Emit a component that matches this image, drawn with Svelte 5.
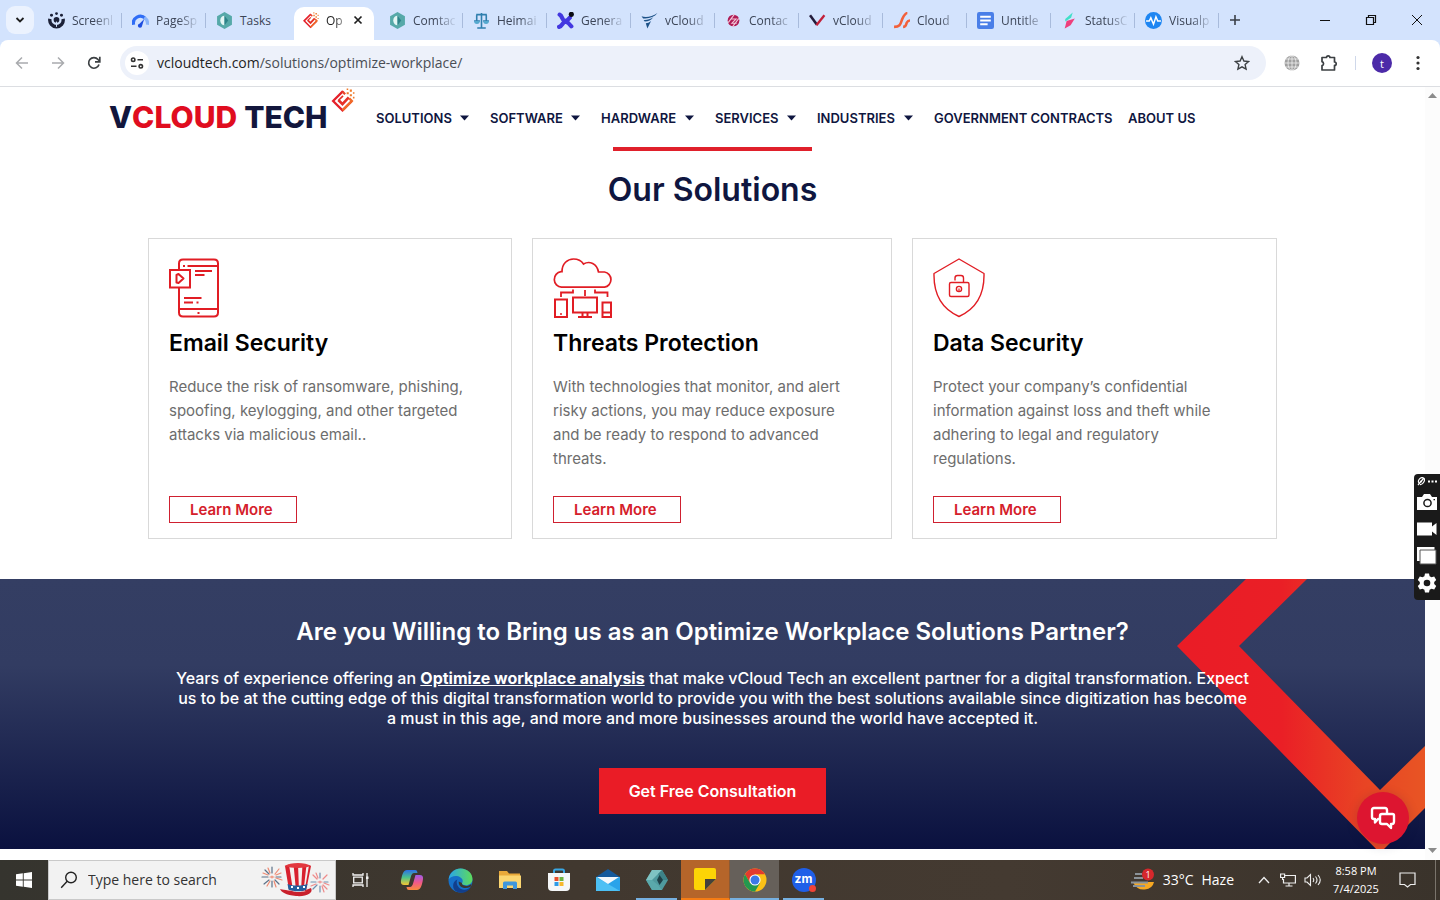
<script>
  const tabs = [
    { title: 'Screenl', icon: 'screen' },
    { title: 'PageSp', icon: 'speed' },
    { title: 'Tasks', icon: 'hex' },
    { title: 'Op', icon: 'diamond', active: true },
    { title: 'Comtac', icon: 'hex' },
    { title: 'Heimai', icon: 'scale' },
    { title: 'Genera', icon: 'x' },
    { title: 'vCloud', icon: 'wing' },
    { title: 'Contac', icon: 'dot' },
    { title: 'vCloud', icon: 'vee' },
    { title: 'Cloud', icon: 'slash' },
    { title: 'Untitle', icon: 'doc' },
    { title: 'StatusC', icon: 'bolt' },
    { title: 'Visualp', icon: 'pulse' }
  ];

  const menu = [
    { label: 'SOLUTIONS', drop: true },
    { label: 'SOFTWARE', drop: true },
    { label: 'HARDWARE', drop: true },
    { label: 'SERVICES', drop: true },
    { label: 'INDUSTRIES', drop: true },
    { label: 'GOVERNMENT CONTRACTS' },
    { label: 'ABOUT US' }
  ];

  const cards = [
    {
      icon: 'email',
      title: 'Email Security',
      text: 'Reduce the risk of ransomware, phishing,\nspoofing, keylogging, and other targeted\nattacks via malicious email..'
    },
    {
      icon: 'threat',
      title: 'Threats Protection',
      text: 'With technologies that monitor, and alert\nrisky actions, you may reduce exposure\nand be ready to respond to advanced\nthreats.'
    },
    {
      icon: 'data',
      title: 'Data Security',
      text: 'Protect your company’s confidential\ninformation against loss and theft while\nadhering to legal and regulatory\nregulations.'
    }
  ];
</script>

{#snippet diamond(size)}
  <svg width={size} height={size} viewBox="0 0 24 24" fill="none" aria-hidden="true">
    <path d="M12.500 3 3 12.500 12 21.500 21 12.500" stroke="#e5202a" stroke-width="2.200" />
    <path d="M12 21.500 21 12.500 18.500 10" stroke="#f06a28" stroke-width="2.200" />
    <path d="M12 3.500 14.500 6" stroke="#e8442a" stroke-width="2.200" />
    <path d="m8 11.500 4 4 6-6.500" stroke="#e63028" stroke-width="2.600" />
    <path d="M8 12 12.500 7.500" stroke="#e63028" stroke-width="1.600" />
    <path d="M16 4h2v2h-2zM19 1.500h2v2h-2zM19 6h2v2h-2zM22 4h1.500v1.500H22zM16 .5h1.500V2H16zM22 8.500h1.500V10H22z" fill="#f07a2a" />
  </svg>
{/snippet}

{#snippet favicon(name)}
  {#if name === 'diamond'}
    {@render diamond(17)}
  {:else}
    <svg width="17" height="17" viewBox="0 0 16 16" fill="none" aria-hidden="true">
      {#if name === 'screen'}
        <path d="M1.800 6.500a6.300 6.300 0 1 0 12.400 0" stroke="#1c2138" stroke-width="3.200" />
        <circle cx="8" cy="7.300" r="2.700" fill="#1c2138" />
        <path d="M8 9v5" stroke="#d3e3fd" />
        <circle cx="3.300" cy="3" r="1.400" fill="#1c2138" /><circle cx="8" cy="1.500" r="1.300" fill="#1c2138" /><circle cx="12.700" cy="3" r="1.400" fill="#1c2138" />
      {:else if name === 'speed'}
        <path d="M1.500 12a6.500 6.500 0 0 1 11-6" stroke="#2f6df6" stroke-width="3" />
        <path d="M11.500 5.300A6.500 6.500 0 0 1 14.500 12" stroke="#8ab4f8" stroke-width="3" />
        <path d="m11.500 6.500-2 6.500a2 2 0 1 1-2.500-2z" fill="#1f4fe0" />
      {:else if name === 'hex'}
        <path d="m8 0 7 4v8l-7 4-7-4V4z" fill="#56a9a9" />
        <path d="M8 3.500A4 4.500 0 0 0 8 12.500z" fill="#e3f6f4" />
        <path d="M8 3.500v9l3.500-4.500z" fill="#2d8288" />
      {:else if name === 'scale'}
        <path d="M8 1v14M3 2.500h10M1 8.500h5.500M9.500 8.500H15M4 15h8M3.500 3v5M12.500 3v5" stroke="#2f7fae" stroke-width="1.500" />
        <path d="M1 8.500a2.700 2.700 0 0 0 5.400 0zM9.600 8.500a2.700 2.700 0 0 0 5.400 0z" fill="#55a9cf" />
      {:else if name === 'x'}
        <path d="M2.500 2.500c3 1.500 1.500 4.500 5 6s4 2 6 5M2 14c3-.5 2.500-3.500 5.500-5s3-1.500 4.500-3.500" stroke="#4338e0" stroke-width="4" stroke-linecap="round" />
        <circle cx="13.500" cy="2.200" r="2.400" fill="#0b0b12" />
      {:else if name === 'wing'}
        <path d="M.5 4c4 1.500 10 .5 15-3-3 4-8 5.500-13.500 5zM2.500 7.500c3 .3 6-.5 9-2.500-2 3-4.500 4-8 4zM4.500 10.500c2 0 3-.5 5-2l-3.500 7z" fill="#1d5288" />
      {:else if name === 'dot'}
        <circle cx="8" cy="8" r="5.500" fill="#b01c56" />
        <path d="m3 10 6-8M7 14l6-8M5.500 6.500h5l-4 4h4.500" stroke="#f3c6d8" />
      {:else if name === 'vee'}
        <path d="M1 3l6.500 9" stroke="#241b3a" stroke-width="2.400" /><path d="M7 12.500 14.500 3" stroke="#c2203a" stroke-width="2.200" />
      {:else if name === 'slash'}
        <path d="M1 14c7 0 6-4 8-8s3-5 4.500-5" stroke="#f2603a" stroke-width="2.400" />
        <path d="M9.500 14c3 0 2.500-2 3.500-4s1.500-2 3-2" stroke="#f2603a" stroke-width="2.400" />
      {:else if name === 'doc'}
        <rect width="16" height="16" rx="2" fill="#4a7fe8" />
        <path d="M3 4.500h10M3 8h10M3 11.500h7" stroke="#fff" stroke-width="1.800" />
      {:else if name === 'bolt'}
        <path d="M4 6.500 11 .5 9.500 5.500 4 9z" fill="#3fe0c8" />
        <path d="m3.500 15.500 1.800-7L13 6l-4 6.500z" fill="#ee3f7c" />
      {:else if name === 'pulse'}
        <circle cx="8" cy="8" r="8" fill="#1e86f2" />
        <path d="M1 8.500h3l1.500-3 2.500 6 2.300-7 1.700 4h3" stroke="#fff" stroke-width="1.400" />
      {/if}
    </svg>
  {/if}
{/snippet}

<div class="desktop">
  <header class="browser">
    <div class="strip">
      <button class="tab-search" aria-label="Search tabs">
        <svg width="10" height="10" viewBox="0 0 10 10" fill="none"><path d="m1.500 3 3.500 3.500L8.500 3" stroke="#1f1f1f" stroke-width="1.800" /></svg>
      </button>
      <div class="tabs">
        {#each tabs as tab, i}
          <div class="tab" class:active={tab.active} class:plain={tabs[i + 1]?.active}>
            <button class="tab-main">
              {@render favicon(tab.icon)}
              <span class="tab-title">{tab.title}</span>
            </button>
            {#if tab.active}
              <button class="tab-close" aria-label="Close tab">
                <svg width="10" height="10" viewBox="0 0 10 10"><path d="m1.500 1.500 7 7M8.500 1.500l-7 7" stroke="#1f1f1f" stroke-width="1.700" /></svg>
              </button>
            {/if}
          </div>
        {/each}
      </div>
      <button class="new-tab" aria-label="New tab">
        <svg width="12" height="12" viewBox="0 0 12 12"><path d="M6 1v10M1 6h10" stroke="#3a3f47" stroke-width="1.600" /></svg>
      </button>
      <div class="window-buttons">
        <button aria-label="Minimize"><svg width="12" height="12" viewBox="0 0 12 12"><path d="M1 6.500h10" stroke="#111" /></svg></button>
        <button aria-label="Restore">
          <svg width="12" height="12" viewBox="0 0 12 12" fill="none"><path d="M1.500 3.500h7v7h-7zM3.500 3.500v-2h7v7h-2" stroke="#111" stroke-width="1.200" /></svg>
        </button>
        <button aria-label="Close"><svg width="12" height="12" viewBox="0 0 12 12"><path d="m1 1 10 10M11 1 1 11" stroke="#111" /></svg></button>
      </div>
    </div>

    <div class="toolbar">
      <button class="tool" aria-label="Back"><svg width="14" height="14" viewBox="0 0 14 14" fill="none"><path d="M13 7H2M7 1.500 1.500 7 7 12.500" stroke="#a9abae" stroke-width="1.500" /></svg></button>
      <button class="tool" aria-label="Forward"><svg width="14" height="14" viewBox="0 0 14 14" fill="none"><path d="M1 7h11M7 1.500 12.500 7 7 12.500" stroke="#a9abae" stroke-width="1.500" /></svg></button>
      <button class="tool" aria-label="Reload">
        <svg width="14" height="14" viewBox="0 0 14 14" fill="none"><path d="M12 8.500A5.300 5.300 0 1 1 11 3.500l1.500 1.500" stroke="#3c4043" stroke-width="1.700" /><path d="M12.800.8v5H8" stroke="#3c4043" stroke-width="1.700" /></svg>
      </button>
      <div class="omnibox">
        <button class="site-info" aria-label="View site information">
          <svg width="14" height="14" viewBox="0 0 14 14" fill="none" stroke="#333" stroke-width="1.600"><circle cx="3.200" cy="3.700" r="1.700" /><path d="M7.500 3.700H13M1 10.300h5.500" /><circle cx="10.800" cy="10.300" r="1.700" /></svg>
        </button>
        <div class="url" role="textbox" aria-label="Address" tabindex="0">vcloudtech.com<span>/solutions/optimize-workplace/</span></div>
        <button class="star" aria-label="Bookmark this tab">
          <svg width="16" height="16" viewBox="0 0 16 16" fill="none"><path d="m8 1.700 1.900 4.300 4.700.5-3.500 3.100 1 4.600L8 11.800l-4.100 2.400 1-4.600L1.400 6.500 6.100 6z" stroke="#3c4043" stroke-width="1.400" /></svg>
        </button>
      </div>
      <div class="extras">
        <button aria-label="Extension">
          <svg width="16" height="16" viewBox="0 0 16 16" fill="none"><circle cx="8" cy="8" r="7.500" fill="#a0a0a0" /><path d="M8 0v16M0 8h16M1.500 4h13M1.500 12h13" stroke="#f1f1f1" stroke-width=".8" /><ellipse cx="8" cy="8" rx="4" ry="7.500" stroke="#f1f1f1" stroke-width=".8" /></svg>
        </button>
        <button aria-label="Extensions">
          <svg width="18" height="18" viewBox="0 0 18 18" fill="none"><path d="M2 3.500h4.500a1.700 1.700 0 0 1 3.400 0h4.600V8a1.700 1.700 0 0 1 0 3.400v4.600H2v-4.400a2 2 0 0 0 0-3.900z" stroke="#3c4043" stroke-width="1.700" stroke-linejoin="round" /></svg>
        </button>
        <span class="rule"></span>
        <button class="avatar" aria-label="Profile">t</button>
        <button class="kebab" aria-label="Menu">
          <svg width="4" height="16" viewBox="0 0 4 16" fill="#333"><circle cx="2" cy="2.500" r="1.600" /><circle cx="2" cy="8" r="1.600" /><circle cx="2" cy="13.500" r="1.600" /></svg>
        </button>
      </div>
    </div>
  </header>

  <div class="viewport">
    <div class="site">
      <nav class="nav">
        <a class="logo" href="#home" aria-label="vCloud Tech">
          <span class="navy">V</span><span class="red">CLOUD</span><span class="navy tech">TECH</span>
          <span class="mark">{@render diamond(25)}</span>
        </a>
        <div class="menu">
          {#each menu as item}
            <a href="#menu">
              {item.label}
              {#if item.drop}<svg width="9" height="6" viewBox="0 0 9 6"><path d="M0 .5h9L4.500 5.500z" fill="#0f1640" /></svg>{/if}
            </a>
          {/each}
        </div>
      </nav>

      <main>
        <section class="solutions">
          <div class="accent"></div>
          <h1>Our Solutions</h1>
          <div class="cards">
            {#each cards as card}
              <article class="card">
                <svg width="60" height="60" viewBox="0 0 60 60" fill="none" stroke="#e11d24" stroke-width="2" aria-hidden="true">
                  {#if card.icon === 'email'}
                    <path d="M10 11.500V5.500q0-4 4-4h31q4 0 4 4v49q0 4-4 4H14q-4 0-4-4V29" />
                    <path d="M18.500 8h30M26 13H43M26 17h9.500M15 40h17.500M15 44.500h9M10 51h39" />
                    <path d="M14 8h2M27.500 44.500h2M28.500 55h2" />
                    <path d="M1 12h20v17.500H1z" />
                    <path d="M7.500 17v7.500l2 .5 5-4.500-5-4.500z" stroke-linejoin="round" />
                  {:else if card.icon === 'threat'}
                    <path d="M8.500 29.200a7.800 7.800 0 0 1-.5-15.500h1C9 5.500 14.500 1 20.500 1c4.500 0 8 2 10 5 6-3.500 13.500-.5 15 8h6a7.700 7.700 0 0 1 0 15.200z" stroke-width="1.700" />
                    <path d="M20 31.500v3H8V39M32 32v6M42 31.500v3h12.500V39" stroke-width="1.800" />
                    <path d="M2 41.500h12v17.500H2zM20 39.500h24v15H20zM49.500 44.500h8.500V59h-8.500zM49.500 54.500h8.500M25 59h14M29.500 54.500V59M34.500 54.500V59" />
                    <path d="M7 56h2" stroke-width="1.600" />
                  {:else}
                    <path d="M26 1 51 15.500C51.500 36 43 51 26 58.500 9 51 .5 36 1 15.500z" stroke-width="1.400" stroke-linejoin="round" />
                    <rect x="16.500" y="24.500" width="19.500" height="14" rx="1.500" stroke-width="1.400" />
                    <path d="M22 22.500V20q0-2.500 2.500-2.500h3.500q2.500 0 2.500 2.500v4.500" stroke-width="1.400" />
                    <circle cx="26" cy="31" r="2.600" stroke-width="1.400" /><path d="M26 30.500v3" stroke-width="1.200" />
                  {/if}
                </svg>
                <h2>{card.title}</h2>
                <p>{card.text}</p>
                <a class="more" href="#more">Learn More</a>
              </article>
            {/each}
          </div>
        </section>

        <section class="cta">
          <svg class="chevron" width="248" height="270" viewBox="0 0 248 270" aria-hidden="true">
            <defs>
              <linearGradient id="flame" x1="0" x2="1" y1="0" y2="0">
                <stop offset="0" stop-color="#ea1c26" /><stop offset=".42" stop-color="#ea1f26" /><stop offset=".75" stop-color="#e84424" /><stop offset="1" stop-color="#e85524" />
              </linearGradient>
            </defs>
            <path d="M69 0h61L62 67l141 144 45-44v62l-45 45L0 67z" fill="url(#flame)" />
          </svg>
          <h2>Are you Willing to Bring us as an Optimize Workplace Solutions Partner?</h2>
          <p>
            Years of experience offering an <a href="#analysis">Optimize workplace analysis</a> that make vCloud Tech an excellent partner for a digital transformation. Expect<br />
            us to be at the cutting edge of this digital transformation world to provide you with the best solutions available since digitization has become<br />
            a must in this age, and more and more businesses around the world have accepted it.
          </p>
          <button class="consult">Get Free Consultation</button>
          <button class="chat" aria-label="Open chat">
            <svg width="26" height="24" viewBox="0 0 26 24" fill="none" stroke="#fff" stroke-width="2.400" stroke-linejoin="round"><path d="M17 7V4q0-2-2-2H4Q2 2 2 4v7q0 2 2 2h1v3.500L8 13h1" /><path d="M12 8h10.500q1.500 0 1.500 1.500v6q0 2.500-2 2.500h-1v4l-4-4h-5q-2 0-2-2v-6q0-2 2-2z" /></svg>
          </button>
        </section>
      </main>
    </div>

    <div class="scrollbar" aria-hidden="true">
      <svg width="9" height="5" viewBox="0 0 9 5"><path d="M0 5h9L4.500 0z" fill="#8b8b8b" /></svg>
      <svg width="9" height="5" viewBox="0 0 9 5"><path d="M0 0h9L4.500 5z" fill="#8b8b8b" /></svg>
    </div>
  </div>

  <aside class="recorder">
    <div class="grip">
      <svg width="8" height="9" viewBox="0 0 8 9" fill="none" stroke="#fff" stroke-width="1.200"><path d="M1 8 6.500 1.500M2 6C0 3 4-.5 6.500 1S6 8 3 7.500M3 4l2 1" /></svg>
      <svg width="9" height="3" viewBox="0 0 9 3" fill="#fff"><path d="M0 .5h2v2H0zM3.500.5h2v2h-2zM7 .5h2v2H7z" /></svg>
    </div>
    <button aria-label="Screenshot"><svg width="20" height="16" viewBox="0 0 20 16"><path d="M0 3h5l2-3h6l2 3h5v13H0z" fill="#fff" /><circle cx="10.500" cy="9" r="3.600" fill="#fff" stroke="#1a1a1a" stroke-width="1.500" /><path d="M16.500 5h1.500v1.200h-1.500z" fill="#1a1a1a" /></svg></button>
    <button aria-label="Record"><svg width="20" height="16" viewBox="0 0 20 16"><path d="M0 1.500h15v4L19.500 2v12L15 10.500v4H0z" fill="#fff" /></svg></button>
    <button aria-label="Gallery"><svg width="20" height="18" viewBox="0 0 20 18"><path d="M0 0h17.500v14H0z" fill="#fff" /><path d="M3 3h16v14H3z" fill="#fff" stroke="#555" /></svg></button>
    <button aria-label="Settings"><svg width="20" height="20" viewBox="0 0 20 20"><path d="M8 .5h4l.6 2.700 1.900 1.100 2.700-.8 2 3.500-2 1.900v2.200l2 1.900-2 3.500-2.700-.8-1.900 1.100-.6 2.700H8l-.6-2.700-1.900-1.100-2.700.8-2-3.500 2-1.900V8.900l-2-1.900 2-3.500 2.700.8 1.900-1.100z" fill="#fff" /><circle cx="10" cy="10" r="3.300" fill="#1a1a1a" /></svg></button>
  </aside>

  <footer class="taskbar">
    <button class="slot" aria-label="Start">
      <svg width="16" height="16" viewBox="0 0 16 16" fill="#fff"><path d="M0 2.300 6.800 1.300v6.200H0zM7.700 1.200 16 0v7.500H7.700zM0 8.400h6.800v6.300L0 13.700zM7.700 8.400H16V16l-8.300-1.200z" /></svg>
    </button>
    <label class="search">
      <svg width="18" height="18" viewBox="0 0 18 18" fill="none" stroke="#222" stroke-width="1.400"><circle cx="11" cy="6.500" r="5.300" /><path d="m7.200 10.300-6 6.500" /></svg>
      <input type="text" placeholder="Type here to search" aria-label="Type here to search" />
      <svg width="72" height="36" viewBox="0 0 72 36" fill="none" aria-hidden="true">
        <g stroke-width="1.200" stroke-linecap="round">
          <path d="M12 11V5M12 19v6M8 15H2M16 15h5M9 12 5 8M15 18l4 4M9 18l-5 4" stroke="#5b7188" />
          <path d="m15 12 4-5M10 11 8 6M14 19l2 6M8 13l-5-2M16 13l5-2M10 19l-3 5M16 16l6 2M12 14v2M10 15h4" stroke="#ef8a72" />
          <path d="M60 16v-5M60 24v6M56 20h-5M64 20h4M57 23l-4 4" stroke="#6f8fb0" />
          <path d="m63 17 4-4M57 17l-4-4M63 23l4 4M62 24l2 6M58 16l-2-5M64 21l5 2M56 22l-5 2M60 19v2M58 20h4" stroke="#ef8a8a" />
        </g>
        <path d="M20 27c3 1 22 4 31-1 3 5-5 9-15 8s-15-4-16-7z" fill="#c9202c" />
        <path d="M25 4c7-3 20-3 26 0l-5 25c-5 2-13 1-17-1z" fill="#f4efee" />
        <path d="m25 4 4-1.500 4 26-4-.5zM33.500 2h4.500l1 27h-3zM42.500 2.200l4 .5-3 26.500h-2.500zM49 3.200l2 .8-5 25-1.500.5z" fill="#d8202e" />
        <path d="M24.500 4c6-4 21-4 26.500 0-6 2.500-20 2.500-26.500 0z" fill="#e2383f" />
        <path d="M27.500 22c5 2 14 2 20 0l-1.500 6c-5 2-13 1.500-17.500-.5z" fill="#255f9e" />
        <path d="M31 25h2M37 26h2M43 25h2" stroke="#fff" stroke-width="2" />
      </svg>
    </label>
    <button class="slot view" aria-label="Task view">
      <svg width="18" height="16" viewBox="0 0 18 16" fill="none" stroke="#f2f2f2" stroke-width="1.300"><path d="M1 1v2h10V1M1 15v-2h10v2M1.700 5.200h8.600v5.600H1.700zM15 1v14" /><path d="M14 4.500h2.500v2.500H14z" fill="#f2f2f2" stroke="none" /></svg>
    </button>
    <button class="slot" aria-label="Copilot">
      <svg width="24" height="24" viewBox="0 0 24 24">
        <defs>
          <linearGradient id="cpa" x1="0" y1="0" x2="0" y2="1"><stop offset="0" stop-color="#2b6fe8" /><stop offset=".5" stop-color="#4cc38a" /><stop offset="1" stop-color="#f7c531" /></linearGradient>
          <linearGradient id="cpb" x1="0" y1="0" x2="0" y2="1"><stop offset="0" stop-color="#a05be8" /><stop offset=".5" stop-color="#f0588a" /><stop offset="1" stop-color="#f78a3c" /></linearGradient>
        </defs>
        <path d="M7 2h8c2 0 2 1 2.500 3h-3c-2 0-3 1-4 5l-2 7H4c-3.500 0-3.500-3-2.500-7s2-8 5.500-8z" fill="url(#cpa)" />
        <path d="M17 22H9c-2 0-2-1-2.500-3h3c2 0 3-1 4-5l2-7H20c3.500 0 3.500 3 2.500 7s-2 8-5.500 8z" fill="url(#cpb)" />
      </svg>
    </button>
    <button class="slot" aria-label="Edge">
      <svg width="25" height="25" viewBox="0 0 24 24">
        <defs>
          <linearGradient id="ega" x1="0" y1="0" x2="1" y2="0"><stop offset="0" stop-color="#2aa7e8" /><stop offset="1" stop-color="#5edb5a" /></linearGradient>
        </defs>
        <circle cx="12" cy="12" r="11.500" fill="#1670c8" />
        <path d="M.6 11C1.500 4.500 6.500.5 12 .5c7 0 11.500 5 11.500 10 0 4-3 6-6.500 6-2.500 0-4-1-3.500-2 1-1.500 1-4-1.500-5.500C8.500 6.500 2.500 7.500.6 11z" fill="url(#ega)" />
        <path d="M9 11c-2 4 1 9.500 6.500 9.800 2.500.1 4.500-.8 6.500-2.800-3 6-9.500 7-14 4.500C3.500 20 4 12.500 9 11z" fill="#123f8c" />
        <path d="M13.500 14.500c-.8 1.500 1.500 2.700 4 2.700 1.500 0 3.500-.5 5-2.200l-.7 3c-6 3-12 .5-11.500-5z" fill="#3b352f" />
      </svg>
    </button>
    <button class="slot" aria-label="File Explorer">
      <svg width="22" height="20" viewBox="0 0 22 20"><path d="M0 1h8l2 2.500h11V18H0z" fill="#e9a93a" /><path d="M0 5.500h22V18H0z" fill="#fbd671" /><path d="M4 19v-6q0-1.500 1.500-1.500h11Q18 11.500 18 13v6h-4v-3.500H8V19z" fill="#3f97dc" /></svg>
    </button>
    <button class="slot" aria-label="Store">
      <svg width="24" height="24" viewBox="0 0 24 24" fill="none"><path d="M7 7V3q0-1.500 1.500-1.500h7Q17 1.500 17 3v4" stroke="#39a7e4" stroke-width="2" /><path d="M1 5h22v14q0 4-4 4H5q-4 0-4-4z" fill="#f5f7f8" /><path d="M7.500 9h4v4h-4z" fill="#e8502c" /><path d="M12.500 9h4v4h-4z" fill="#6db33f" /><path d="M7.500 14h4v4h-4z" fill="#2c9be8" /><path d="M12.500 14h4v4h-4z" fill="#f7b82c" /></svg>
    </button>
    <button class="slot" aria-label="Mail">
      <svg width="24" height="22" viewBox="0 0 24 22"><path d="M0 8 12 0l12 8v4H0z" fill="#155a9c" /><path d="M0 8h24v14H0z" fill="#2aa3ea" /><path d="M0 8l24 14H0z" fill="#4cc0f4" /><path d="M1 8h22l-11 7z" fill="#f3f8fc" /></svg>
    </button>
    <button class="slot running" aria-label="Workspace">
      <svg width="22" height="20" viewBox="0 0 22 20"><path d="M6 0h10l6 10-6 10H6L0 10z" fill="#4f9a9e" /><path d="M6 0h10l-5 5-5 5H0z" fill="#7fc3c3" /><path d="M16 0l6 10h-6l-4-6z" fill="#3d8388" /><path d="M6 20h10l-4-5-6-5H0z" fill="#5aa9ab" /><path d="M13.500 5 17 10l-3.500 5-2.500-5z" fill="#1e4148" /></svg>
    </button>
    <button class="slot sticky" aria-label="Sticky Notes">
      <svg width="22" height="22" viewBox="0 0 22 22"><path d="M0 2q0-2 2-2h18q2 0 2 2v9L11 22H2q-2 0-2-2z" fill="#fdd406" /><path d="M11 22V11h11z" fill="#43413c" /></svg>
    </button>
    <button class="slot running current" aria-label="Chrome">
      <svg width="24" height="24" viewBox="0 0 24 24"><circle cx="12" cy="12" r="11.500" fill="#fbc116" /><path d="M2 6.300A11.500 11.500 0 0 1 22 6.300H12L7 15z" fill="#e33b2e" /><path d="M2 6.300A11.500 11.500 0 0 0 12 23.500L17 15H7z" fill="#23984f" /><circle cx="12" cy="12" r="5.600" fill="#fff" /><circle cx="12" cy="12" r="4.500" fill="#3b78e7" /></svg>
    </button>
    <button class="slot running zoom" aria-label="Zoom"><span>zm</span><i></i></button>

    <div class="tray">
      <button class="weather">
        <svg width="25" height="24" viewBox="0 0 25 24" fill="none"><path d="M3 14h21a10.500 9 0 0 1-20 2z" fill="#f6a823" /><path d="M5 6h7M4 10h9M1 14.500h17M3 18h12" stroke="#8b9298" stroke-width="2" /><circle cx="18" cy="6.500" r="6" fill="#d6282c" /><text x="18" y="10" text-anchor="middle" font-family="Open Sans" font-size="9" fill="#fff">1</text></svg>
        <span>33°C</span><span>Haze</span>
      </button>
      <button class="status" aria-label="Show hidden icons"><svg width="12" height="8" viewBox="0 0 12 8" fill="none"><path d="m1 7 5-5.500L11 7" stroke="#eee" stroke-width="1.300" /></svg></button>
      <button class="status" aria-label="Network"><svg width="16" height="14" viewBox="0 0 16 14" fill="none" stroke="#eee" stroke-width="1.200"><path d="M5 2.500h10.400v7.500H3.500V6M9 10v3M5.500 13h7M.6 1h4v3.500h-4zM2.600 4.500V7" /></svg></button>
      <button class="status" aria-label="Volume"><svg width="17" height="14" viewBox="0 0 17 14" fill="none" stroke="#eee" stroke-width="1.100"><path d="M1 5h2l3.500-3.500v11L3 9H1zM9 5q1.500 2 0 4M11.500 3.500q3 3.500 0 7M14 2q4.500 5 0 10" /></svg></button>
      <div class="clock"><span>8:58 PM</span><span>7/4/2025</span></div>
      <button class="notice" aria-label="Notifications"><svg width="17" height="16" viewBox="0 0 17 16" fill="none"><path d="M1 1h15v11.500h-4.500L8.500 15l-3-2.500H1z" stroke="#eee" stroke-width="1.200" /></svg></button>
    </div>
  </footer>
</div>

<style>
  :global(body) {
    margin: 0;
    background: #fff;
  }

  .desktop {
    position: relative;
    display: flex;
    flex-direction: column;
    height: 100vh;
    overflow: hidden;
    font-family: Inter, 'Liberation Sans', sans-serif;
  }

  button {
    display: flex;
    align-items: center;
    justify-content: center;
    padding: 0;
    border: 0;
    background: none;
    font: inherit;
    color: inherit;
  }

  a {
    color: inherit;
    text-decoration: none;
  }

  svg {
    flex: none;
  }

  /* Browser frame */
  .browser {
    flex: none;
    font-family: 'Open Sans', 'Noto Sans', sans-serif;
    background: #d3e3fd;
    border-bottom: 1px solid #dcdee2;
  }

  .strip {
    display: flex;
    height: 40px;
  }

  .tab-search {
    width: 28px;
    height: 28px;
    margin: 6px 4px 0 6px;
    border-radius: 9px;
    background: #ebf2fe;
  }

  .tabs {
    display: flex;
    flex: 1;
    min-width: 0;
  }

  .tab {
    position: relative;
    display: flex;
    flex: 1;
    align-items: center;
    min-width: 0;
    height: 33px;
    padding: 0 8px 0 10px;
    margin-top: 7px;
    box-sizing: border-box;
  }

  .tab::after {
    content: '';
    position: absolute;
    right: 0;
    top: 6px;
    width: 1px;
    height: 15px;
    background: #a8bbdc;
  }

  .tab.active::after,
  .tab.plain::after {
    display: none;
  }

  .tab-main {
    gap: 7px;
    height: 26px;
    margin-bottom: 6px;
  }

  .tab-title {
    white-space: nowrap;
    font-size: 12px;
    line-height: 18px;
    color: #3c4557;
    mask-image: linear-gradient(to right, #000 22px, transparent 44px);
  }

  .tab.plain .tab-title {
    mask-image: none;
  }

  .tab.active {
    flex: 0 0 89px;
    justify-content: space-between;
    padding: 0 11px 0 12px;
  }

  .tab.active::before {
    content: '';
    position: absolute;
    inset: 0 5px 0 4px;
    border-radius: 10px 10px 0 0;
    background: #fff;
  }

  .tab.active button {
    position: relative;
  }

  .tab.active .tab-title {
    color: #1f1f1f;
    mask-image: linear-gradient(to right, #000 50%, rgba(0, 0, 0, 0.5));
  }

  .tab-close {
    width: 20px;
    height: 20px;
    margin-bottom: 7px;
  }

  .new-tab {
    width: 32px;
    margin-right: 51px;
  }

  .window-buttons {
    display: flex;
  }

  .window-buttons button {
    width: 46px;
  }

  .toolbar {
    display: flex;
    align-items: center;
    height: 46px;
    padding: 0 12px 0 4px;
    border-radius: 8px 8px 0 0;
    background: #fff;
  }

  .tool {
    width: 36px;
    height: 36px;
  }

  .omnibox {
    display: flex;
    flex: 1;
    align-items: center;
    height: 34px;
    margin: 0 13px 0 8px;
    padding: 0 16px 0 5px;
    border-radius: 17px;
    background: #edf1fa;
  }

  .site-info {
    width: 24px;
    height: 24px;
    border-radius: 50%;
    background: #fff;
  }

  .url {
    flex: 1;
    padding-left: 8px;
    font-size: 14px;
    line-height: 20px;
    color: #1f1f1f;
  }

  .url span {
    color: #4a4e55;
  }

  .extras {
    display: flex;
    align-items: center;
  }

  .extras button {
    width: 26px;
    height: 26px;
    margin-right: 11px;
  }

  .rule {
    width: 1px;
    height: 14px;
    margin: 0 16px 0 2px;
    background: #cfd8ea;
  }

  .extras .avatar {
    width: 20px;
    height: 20px;
    margin-right: 20px;
    border-radius: 50%;
    background: #4c2aa8;
    color: #fff;
    font-size: 11px;
  }

  .extras .kebab {
    width: 12px;
    margin-right: 4px;
  }

  /* Web page */
  .viewport {
    display: flex;
    flex: 1;
    min-height: 0;
    overflow: hidden;
  }

  .site {
    flex: 1;
    min-width: 0;
  }

  .scrollbar {
    display: flex;
    flex-direction: column;
    justify-content: space-between;
    align-items: center;
    width: 15px;
    padding: 6px 0 7px;
    box-sizing: border-box;
    background: #fcfcfc;
  }

  .nav {
    display: flex;
    align-items: center;
    height: 60px;
    padding: 0 20px 0 109px;
  }

  .logo {
    position: relative;
    display: flex;
    width: 267px;
    font-size: 30px;
    line-height: 30px;
    font-weight: 800;
  }

  .navy {
    color: #12163c;
  }

  .red {
    color: #e00d1f;
  }

  .tech {
    margin-left: 7px;
  }

  .mark {
    position: absolute;
    right: 21px;
    top: -14px;
    line-height: 0;
  }

  .menu {
    display: grid;
    grid-template-columns: 114px 111px 114px 102px 117px 194px auto;
    font-size: 13px;
    line-height: 20px;
    font-weight: 600;
    color: #0f1640;
    white-space: nowrap;
    padding-top: 2px;
  }

  .menu a {
    display: flex;
    align-items: center;
    justify-content: space-between;
    padding-right: 21px;
  }

  .solutions {
    display: flex;
    flex-direction: column;
    align-items: center;
    padding-bottom: 40px;
  }

  .accent {
    width: 199px;
    height: 4px;
    background: #e0202b;
  }

  h1,
  h2,
  p {
    margin: 0;
  }

  h1 {
    margin: 19px 0 28px;
    font-size: 32px;
    line-height: 40px;
    font-weight: 600;
    color: #0f1640;
  }

  .cards {
    display: grid;
    grid-template-columns: 364fr 360fr 365fr;
    gap: 20px;
    width: 100%;
    max-width: 1129px;
  }

  .card {
    display: flex;
    flex-direction: column;
    align-items: flex-start;
    padding: 19px 20px 15px;
    border: 1px solid #d9d9d9;
  }

  .card h2 {
    margin: 9px 0 16px;
    font-size: 23px;
    line-height: 32px;
    font-weight: 600;
    color: #000;
  }

  .card p {
    min-height: 96px;
    margin-bottom: 25px;
    font-size: 15px;
    line-height: 24px;
    color: #6d6d6d;
    white-space: pre-line;
  }

  .more {
    padding: 0 23px 0 20px;
    border: 1px solid #cf2030;
    font-size: 15px;
    line-height: 25px;
    font-weight: 600;
    color: #d5202b;
  }

  .cta {
    position: relative;
    display: flex;
    flex-direction: column;
    align-items: center;
    padding: 37px 0 35px;
    background: linear-gradient(#343e63 0%, #323c62 32%, #0a113f 100%);
    color: #fff;
    text-align: center;
  }

  .chevron {
    position: absolute;
    top: 0;
    right: 0;
  }

  .cta h2 {
    position: relative;
    font-size: 24px;
    line-height: 32px;
    font-weight: 600;
  }

  .cta p {
    position: relative;
    margin: 20px 0 40px;
    font-size: 16px;
    line-height: 20px;
    font-weight: 500;
  }

  .cta p a {
    font-weight: 700;
    text-decoration: underline;
  }

  .consult {
    padding: 0 30px;
    background: #ea1c26;
    font-size: 16px;
    line-height: 46px;
    font-weight: 600;
  }

  .chat {
    position: absolute;
    right: 16px;
    bottom: 5px;
    width: 52px;
    height: 52px;
    border-radius: 50%;
    background: #dd1530;
    box-shadow: 0 2px 12px rgba(0, 0, 60, 0.16);
  }

  /* Floating recorder */
  .recorder {
    position: absolute;
    right: 0;
    top: 474px;
    display: flex;
    flex-direction: column;
    align-items: center;
    width: 26px;
    padding-bottom: 4px;
    border-radius: 4px 0 0 4px;
    background: #1a1a1a;
  }

  .grip {
    display: flex;
    align-items: center;
    gap: 3px;
    height: 14px;
  }

  .recorder button {
    height: 27px;
  }

  /* Windows taskbar */
  .taskbar {
    display: flex;
    flex: none;
    height: 40px;
    background: linear-gradient(90deg, #35342e, #41382f 40%, #443a31 70%, #3a332b);
    color: #fff;
    font-family: 'Open Sans', 'Noto Sans', sans-serif;
  }

  .slot {
    position: relative;
    width: 49px;
    height: 40px;
    box-sizing: border-box;
  }

  .slot:first-child {
    width: 48px;
  }

  .view {
    margin-right: 2px;
  }

  .search {
    display: flex;
    align-items: center;
    width: 288px;
    padding: 0 3px 0 11px;
    box-sizing: border-box;
    border: 1px solid #c9c9c9;
    background: #f2f2f2;
  }

  .search input {
    flex: 1;
    min-width: 0;
    padding: 0 0 0 10px;
    border: 0;
    outline: 0;
    background: none;
    font: 14px/20px 'Open Sans', 'Noto Sans', sans-serif;
    color: #333;
  }

  .search input::placeholder {
    color: #333;
    opacity: 1;
  }

  .running::after {
    content: '';
    position: absolute;
    left: 4px;
    right: 4px;
    bottom: 0;
    height: 2px;
    background: #76b0e0;
  }

  .current {
    background: #66605a;
  }

  .current::after {
    left: 0;
    right: 0;
  }

  .sticky {
    background: #b5652a;
    border-right: 1px solid #8a5a36;
    border-bottom: 2px solid #f57c14;
  }

  .zoom span {
    width: 24px;
    height: 24px;
    border-radius: 50%;
    background: #1f5fe8;
    font: 700 12px/22px Inter, sans-serif;
  }

  .zoom i {
    position: absolute;
    right: 12px;
    bottom: 8px;
    width: 7px;
    height: 7px;
    border-radius: 50%;
    background: #f04438;
  }

  .tray {
    display: flex;
    align-items: center;
    margin-left: auto;
    padding-right: 4px;
  }

  .weather {
    gap: 8px;
    margin-right: 18px;
    font-size: 14px;
    line-height: 20px;
  }

  .status {
    width: 24px;
    height: 40px;
  }

  .clock {
    display: flex;
    flex-direction: column;
    align-items: center;
    width: 64px;
    font-size: 11px;
    line-height: 18px;
  }

  .notice {
    width: 48px;
    height: 40px;
    padding-right: 8px;
    border-right: 1px solid #7a746c;
  }
</style>
